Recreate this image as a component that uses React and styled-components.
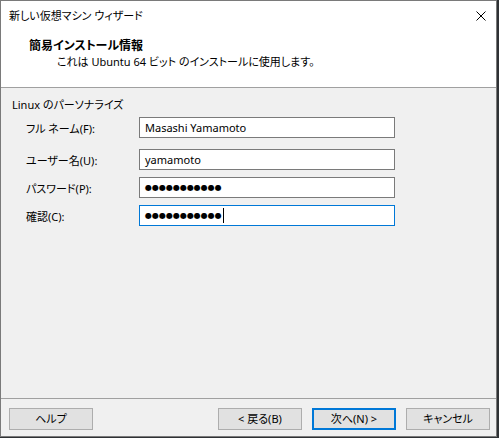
import React from 'react';
import styled, { createGlobalStyle } from 'styled-components';

const GlobalStyle = createGlobalStyle`
  html, body {
    margin: 0;
    padding: 0;
    background: #2e3134;
  }
  body {
    font-family: "Noto Sans", "Noto Sans CJK JP", sans-serif;
    font-size: 11px;
    color: #000;
    font-feature-settings: "palt";
  }
`;

const Window = styled.div`
  width: 497px;
  height: 437px;
  box-sizing: border-box;
  border: 1px solid #7a7a7a;
  display: flex;
  flex-direction: column;
  background: #f0f0f0;
`;

const TitleBar = styled.div`
  height: 30px;
  background: #fff;
  display: flex;
  align-items: center;
  justify-content: space-between;
  padding: 0 8px 0 8px;
  line-height: 16px;
`;

const CloseButton = styled.div`
  width: 10px;
  height: 10px;
  margin-right: 2px;
  display: flex;
`;

const Header = styled.div`
  height: 56px;
  background: #fff;
  border-bottom: 1px solid #a0a0a0;
  padding-left: 28px;
  display: flex;
  flex-direction: column;
`;

const HeaderTitle = styled.div`
  font-weight: bold;
  font-size: 12px;
  line-height: 16px;
  margin-top: 7px;
`;

const HeaderText = styled.div`
  line-height: 16px;
  padding-left: 28px;
`;

const Content = styled.div`
  flex: 1;
  padding: 9px 12px 0 11px;
`;

const GroupLabel = styled.div`
  line-height: 16px;
`;

const Form = styled.div`
  display: grid;
  grid-template-columns: 113px 256px;
  padding-left: 14px;
  margin-top: 4px;
`;

const Label = styled.div`
  display: flex;
  align-items: center;
  height: 21px;
  margin-top: ${(p) => p.$gap}px;
`;

const Field = styled.div`
  height: 21px;
  box-sizing: border-box;
  border: 1px solid ${(p) => (p.$focused ? '#0078d7' : '#7a7a7a')};
  background: #fff;
  display: flex;
  align-items: center;
  padding-left: 5px;
  margin-top: ${(p) => p.$gap}px;
  line-height: 16px;
`;

const Dots = styled.span`
  font-family: "DejaVu Sans", sans-serif;
  font-size: 8px;
  letter-spacing: 0;
  line-height: 10px;
  padding-top: 1px;
`;

const Caret = styled.span`
  width: 1px;
  height: 15px;
  background: #000;
  margin-left: 1px;
`;

const Footer = styled.div`
  height: 38px;
  border-top: 1px solid #a0a0a0;
  display: flex;
  align-items: flex-start;
  padding: 9px 6px 0 8px;
  gap: 10px;
  box-sizing: border-box;
`;

const Spacer = styled.div`
  flex: 1;
`;

const Button = styled.div`
  width: 84px;
  height: 22px;
  box-sizing: border-box;
  background: #e1e1e1;
  border: ${(p) => (p.$default ? '2px solid #0078d7' : '1px solid #adadad')};
  display: flex;
  align-items: center;
  justify-content: center;
  line-height: 16px;
`;

const rows = [
  { label: 'フル ネーム(F):', value: 'Masashi Yamamoto', gap: 0 },
  { label: 'ユーザー名(U):', value: 'yamamoto', gap: 11 },
  { label: 'パスワード(P):', value: '●●●●●●●●●●●', secret: true, gap: 7 },
  { label: '確認(C):', value: '●●●●●●●●●●●', secret: true, focused: true, gap: 7 },
];

export default function App() {
  return (
    <>
      <GlobalStyle />
      <Window>
        <TitleBar>
          <span>新しい仮想マシン ウィザード</span>
          <CloseButton>
            <svg width="10" height="10" viewBox="0 0 10 10">
              <path d="M0.5 0.5 L9.5 9.5 M9.5 0.5 L0.5 9.5" stroke="#000" strokeWidth="1" fill="none" />
            </svg>
          </CloseButton>
        </TitleBar>
        <Header>
          <HeaderTitle>簡易インストール情報</HeaderTitle>
          <HeaderText>これは Ubuntu 64 ビット のインストールに使用します。</HeaderText>
        </Header>
        <Content>
          <GroupLabel>Linux のパーソナライズ</GroupLabel>
          <Form>
            {rows.map((r) => (
              <React.Fragment key={r.label}>
                <Label $gap={r.gap}>{r.label}</Label>
                <Field $gap={r.gap} $focused={r.focused}>
                  {r.secret ? <Dots>{r.value}</Dots> : r.value}
                  {r.focused && <Caret />}
                </Field>
              </React.Fragment>
            ))}
          </Form>
        </Content>
        <Footer>
          <Button>ヘルプ</Button>
          <Spacer />
          <Button>&lt; 戻る(B)</Button>
          <Button $default>次へ(N) &gt;</Button>
          <Button>キャンセル</Button>
        </Footer>
      </Window>
    </>
  );
}
